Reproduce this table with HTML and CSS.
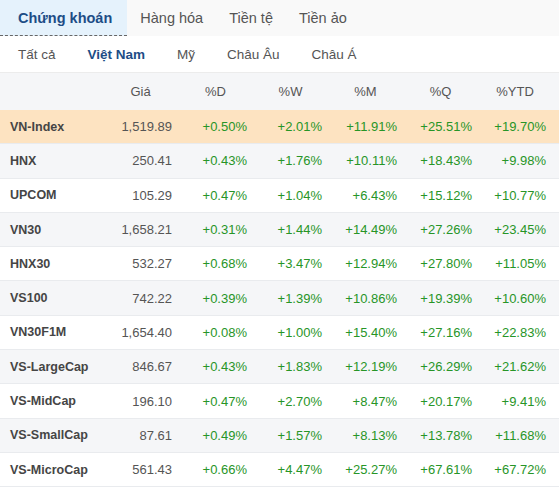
FILE: index.html
```html
<!DOCTYPE html>
<html lang="vi">
<head>
<meta charset="utf-8">
<title>Chứng khoán</title>
<link rel="stylesheet" href="styles.css">
</head>
<body>
<div class="widget">
  <div class="tabs">
    <div class="tab active">Chứng khoán</div>
    <div class="tab">Hàng hóa</div>
    <div class="tab">Tiền tệ</div>
    <div class="tab">Tiền ảo</div>
  </div>
  <div class="subtabs">
    <div class="subtab">Tất cả</div>
    <div class="subtab active">Việt Nam</div>
    <div class="subtab">Mỹ</div>
    <div class="subtab">Châu Âu</div>
    <div class="subtab">Châu Á</div>
  </div>
  <table class="quotes">
    <colgroup>
      <col class="c-name"><col class="c-num"><col class="c-num"><col class="c-num"><col class="c-num"><col class="c-num"><col class="c-last">
    </colgroup>
    <thead>
      <tr><th></th><th>Giá</th><th>%D</th><th>%W</th><th>%M</th><th>%Q</th><th>%YTD</th></tr>
    </thead>
    <tbody>
      <tr class="hl"><td>VN-Index</td><td>1,519.89</td><td>+0.50%</td><td>+2.01%</td><td>+11.91%</td><td>+25.51%</td><td>+19.70%</td></tr>
      <tr><td>HNX</td><td>250.41</td><td>+0.43%</td><td>+1.76%</td><td>+10.11%</td><td>+18.43%</td><td>+9.98%</td></tr>
      <tr><td>UPCOM</td><td>105.29</td><td>+0.47%</td><td>+1.04%</td><td>+6.43%</td><td>+15.12%</td><td>+10.77%</td></tr>
      <tr><td>VN30</td><td>1,658.21</td><td>+0.31%</td><td>+1.44%</td><td>+14.49%</td><td>+27.26%</td><td>+23.45%</td></tr>
      <tr><td>HNX30</td><td>532.27</td><td>+0.68%</td><td>+3.47%</td><td>+12.94%</td><td>+27.80%</td><td>+11.05%</td></tr>
      <tr><td>VS100</td><td>742.22</td><td>+0.39%</td><td>+1.39%</td><td>+10.86%</td><td>+19.39%</td><td>+10.60%</td></tr>
      <tr><td>VN30F1M</td><td>1,654.40</td><td>+0.08%</td><td>+1.00%</td><td>+15.40%</td><td>+27.16%</td><td>+22.83%</td></tr>
      <tr><td>VS-LargeCap</td><td>846.67</td><td>+0.43%</td><td>+1.83%</td><td>+12.19%</td><td>+26.29%</td><td>+21.62%</td></tr>
      <tr><td>VS-MidCap</td><td>196.10</td><td>+0.47%</td><td>+2.70%</td><td>+8.47%</td><td>+20.17%</td><td>+9.41%</td></tr>
      <tr><td>VS-SmallCap</td><td>87.61</td><td>+0.49%</td><td>+1.57%</td><td>+8.13%</td><td>+13.78%</td><td>+11.68%</td></tr>
      <tr><td>VS-MicroCap</td><td>561.43</td><td>+0.66%</td><td>+4.47%</td><td>+25.27%</td><td>+67.61%</td><td>+67.72%</td></tr>
    </tbody>
  </table>
</div>
</body>
</html>
```

FILE: styles.css
```css
html, body {
  margin: 0;
  padding: 0;
  background: #ffffff;
}

body {
  font-family: "Liberation Sans", Arial, sans-serif;
  color: #555555;
}

.widget {
  width: 559px;
}

.tabs {
  display: flex;
  height: 36px;
  background: #f9f9f9;
}

.tab {
  display: flex;
  align-items: center;
  padding: 0 13px;
  font-size: 14.5px;
  color: #555555;
}

.tab.active {
  padding: 0 15px 0 18px;
  background: #e5f2fc;
  color: #1d4d86;
  font-weight: bold;
  border-bottom: 1px dashed #666666;
  box-sizing: border-box;
}

.subtabs {
  display: flex;
  height: 37px;
  padding-left: 2px;
  border-bottom: 1px solid #ececec;
  box-sizing: border-box;
}

.subtab {
  display: flex;
  align-items: center;
  padding: 0 16px;
  font-size: 13.5px;
  color: #555555;
}

.subtab.active {
  color: #1d4d86;
  font-weight: bold;
}

.quotes {
  width: 559px;
  table-layout: fixed;
  border-collapse: collapse;
  font-size: 13px;
}

.c-name { width: 103px; }
.c-num { width: 75px; }
.c-last { width: 81px; }

.quotes th {
  height: 37px;
  padding: 0 6px;
  background: #f5f6f8;
  font-weight: normal;
  color: #555555;
  text-align: center;
}

.quotes th:last-child {
  padding-right: 13px;
}

.quotes td {
  height: 33.3px;
  padding: 0 6px;
  text-align: right;
  color: #279527;
  border-bottom: 1px solid #e9ebee;
}

.quotes td:first-child {
  padding-left: 10px;
  text-align: left;
  font-weight: bold;
  color: #454545;
  font-size: 12.5px;
}

.quotes td:nth-child(2) {
  color: #555555;
}

.quotes td:last-child {
  padding-right: 13px;
}

.quotes tbody tr:nth-child(even) td {
  background: #f5f6f8;
}

.quotes tbody tr.hl td {
  background: #fde3c1;
}
```
